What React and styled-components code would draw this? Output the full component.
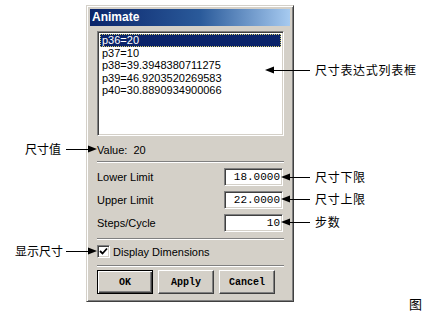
import React from 'react';
import styled, {createGlobalStyle} from 'styled-components';

const GlobalStyle = createGlobalStyle`
  html, body { margin: 0; padding: 0; background: #fff; }
  body { font-family: "Liberation Sans", Arial, sans-serif; }
`;

const Figure = styled.div`
  position: relative;
  width: 423px;
  height: 316px;
  overflow: hidden;
  background: #fff;
  padding: 5px 0 0 86px;
  box-sizing: border-box;
`;

const Dialog = styled.div`
  width: 208px;
  height: 297px;
  box-sizing: border-box;
  background: #d4d0c8;
  border: 1px solid;
  border-color: #d4d0c8 #404040 #404040 #d4d0c8;
  box-shadow: inset 1px 1px #fff, inset -1px -1px #808080;
  padding: 3px;
  display: flex;
  flex-direction: column;
`;

const TitleBar = styled.div`
  height: 17px;
  line-height: 17px;
  padding-left: 2px;
  background: linear-gradient(90deg, #0a246a 0%, #2a5a9a 55%, #a6caf0 100%);
  color: #fff;
  font-weight: bold;
  font-size: 12px;
`;

const Body = styled.div`
  padding: 5px 6px 0 7px;
  display: flex;
  flex-direction: column;
  font-size: 11px;
  color: #000;
`;

const ListBox = styled.div`
  height: 105px;
  box-sizing: border-box;
  background: #fff;
  border: 1px solid;
  border-color: #808080 #fff #fff #808080;
  box-shadow: inset 1px 1px #404040, inset -1px -1px #d4d0c8;
  padding: 2px;
`;

const ListItem = styled.div`
  height: 12.5px;
  line-height: 12.5px;
  padding-left: 2px;
  white-space: nowrap;
  background: ${p => (p.$selected ? '#0a246a' : 'transparent')};
  color: ${p => (p.$selected ? '#fff' : '#000')};
  outline: ${p => (p.$selected ? '1px dotted #d8d070' : 'none')};
  outline-offset: -1px;
`;

const ValueLine = styled.div`
  margin-top: 8px;
  line-height: 12px;
  white-space: pre;
`;

const Separator = styled.div`
  margin-top: ${p => p.$gap}px;
  border-top: 1px solid #808080;
  border-bottom: 1px solid #fff;
`;

const Fields = styled.div`
  margin-top: 5px;
  display: flex;
  flex-direction: column;
  gap: 5px;
`;

const FieldRow = styled.div`
  height: 18px;
  display: flex;
  align-items: center;
  justify-content: space-between;
`;

const FieldBox = styled.div`
  width: 59px;
  height: 18px;
  margin-right: 1px;
  box-sizing: border-box;
  background: #fff;
  border: 1px solid;
  border-color: #808080 #fff #fff #808080;
  box-shadow: inset 1px 1px #404040, inset -1px -1px #d4d0c8;
  font-family: "Liberation Mono", "Courier New", monospace;
  font-size: 11px;
  line-height: 16px;
  text-align: right;
  padding-right: 2px;
`;

const CheckRow = styled.div`
  margin-top: 5px;
  height: 13px;
  display: flex;
  align-items: center;
  gap: 3px;
`;

const CheckBox = styled.div`
  width: 13px;
  height: 13px;
  box-sizing: border-box;
  background: #fff;
  border: 1px solid;
  border-color: #808080 #fff #fff #808080;
  box-shadow: inset 1px 1px #404040, inset -1px -1px #d4d0c8;
  display: flex;
  align-items: center;
  justify-content: center;
`;

const Buttons = styled.div`
  margin-top: 3px;
  display: flex;
  gap: 5px;
`;

const Button = styled.div`
  width: 56px;
  height: 24px;
  box-sizing: border-box;
  background: #d4d0c8;
  border: 1px solid;
  border-color: ${p => (p.$default ? '#000' : '#fff #404040 #404040 #fff')};
  box-shadow: ${p =>
    p.$default
      ? 'inset 1px 1px #fff, inset -1px -1px #404040, inset -2px -2px #808080'
      : 'inset -1px -1px #808080'};
  display: flex;
  align-items: center;
  justify-content: center;
  font-family: "Liberation Mono", "Courier New", monospace;
  font-weight: bold;
  font-size: 10px;
`;

const Callout = styled.div`
  position: absolute;
  top: ${p => p.$y - 8}px;
  ${p => (p.$right !== undefined ? `right: ${p.$right}px;` : `left: ${p.$left}px;`)}
  height: 16px;
  display: flex;
  align-items: center;
  gap: ${p => p.$gap}px;
`;

const Note = styled.span`
  font-family: "Noto Sans CJK SC", "Noto Sans", sans-serif;
  font-size: 12px;
  line-height: 16px;
  letter-spacing: ${p => p.$spacing || 0}px;
  color: #000;
  white-space: nowrap;
`;

const Corner = styled(Note)`
  position: absolute;
  left: 409px;
  top: 296px;
  font-size: 13px;
`;

const Arrow = ({width, dir}) => (
  <svg width={width} height="8" viewBox={`0 0 ${width} 8`} style={{display: 'block'}}>
    {dir === 'left' ? (
      <>
        <polygon points="0,4 9,0.5 9,7.5" fill="#000"/>
        <line x1="8" y1="4.5" x2={width} y2="4.5" stroke="#000" strokeWidth="1"/>
      </>
    ) : (
      <>
        <polygon points={`${width},4 ${width - 9},0.5 ${width - 9},7.5`} fill="#000"/>
        <line x1="0" y1="4.5" x2={width - 8} y2="4.5" stroke="#000" strokeWidth="1"/>
      </>
    )}
  </svg>
);

const items = [
  'p36=20',
  'p37=10',
  'p38=39.3948380711275',
  'p39=46.9203520269583',
  'p40=30.8890934900066',
];

const fields = [
  {label: 'Lower Limit', value: '18.0000'},
  {label: 'Upper Limit', value: '22.0000'},
  {label: 'Steps/Cycle', value: '10'},
];

const rightNotes = [
  {text: '尺寸表达式列表框', x: 265, y: 70},
  {text: '尺寸下限', x: 281, y: 177},
  {text: '尺寸上限', x: 281, y: 199},
  {text: '步数', x: 281, y: 222},
];

const leftNotes = [
  {text: '尺寸值', y: 149, gap: 5},
  {text: '显示尺寸', y: 251, gap: 3},
];

export default function App() {
  return (
    <>
      <GlobalStyle/>
      <Figure>
        <Dialog>
          <TitleBar>Animate</TitleBar>
          <Body>
            <ListBox>
              {items.map((t, i) => (
                <ListItem key={t} $selected={i === 0}>{t}</ListItem>
              ))}
            </ListBox>
            <ValueLine>{'Value:  20'}</ValueLine>
            <Separator $gap={5}/>
            <Fields>
              {fields.map(f => (
                <FieldRow key={f.label}>
                  <span>{f.label}</span>
                  <FieldBox>{f.value}</FieldBox>
                </FieldRow>
              ))}
            </Fields>
            <Separator $gap={6}/>
            <CheckRow>
              <CheckBox>
                <svg width="9" height="9" viewBox="0 0 9 9">
                  <path d="M1 4 L3.5 6.5 L8 1.5" stroke="#000" strokeWidth="1.8" fill="none"/>
                </svg>
              </CheckBox>
              <span>Display Dimensions</span>
            </CheckRow>
            <Separator $gap={7}/>
            <Buttons>
              <Button $default>OK</Button>
              <Button>Apply</Button>
              <Button>Cancel</Button>
            </Buttons>
          </Body>
        </Dialog>

        {rightNotes.map(n => (
          <Callout key={n.text} $left={n.x} $y={n.y} $gap={5}>
            <Arrow width={310 - n.x} dir="left"/>
            <Note $spacing={0.7}>{n.text}</Note>
          </Callout>
        ))}
        {leftNotes.map(n => (
          <Callout key={n.text} $right={326} $y={n.y} $gap={n.gap}>
            <Note>{n.text}</Note>
            <Arrow width={31} dir="right"/>
          </Callout>
        ))}
        <Corner>图</Corner>
      </Figure>
    </>
  );
}
